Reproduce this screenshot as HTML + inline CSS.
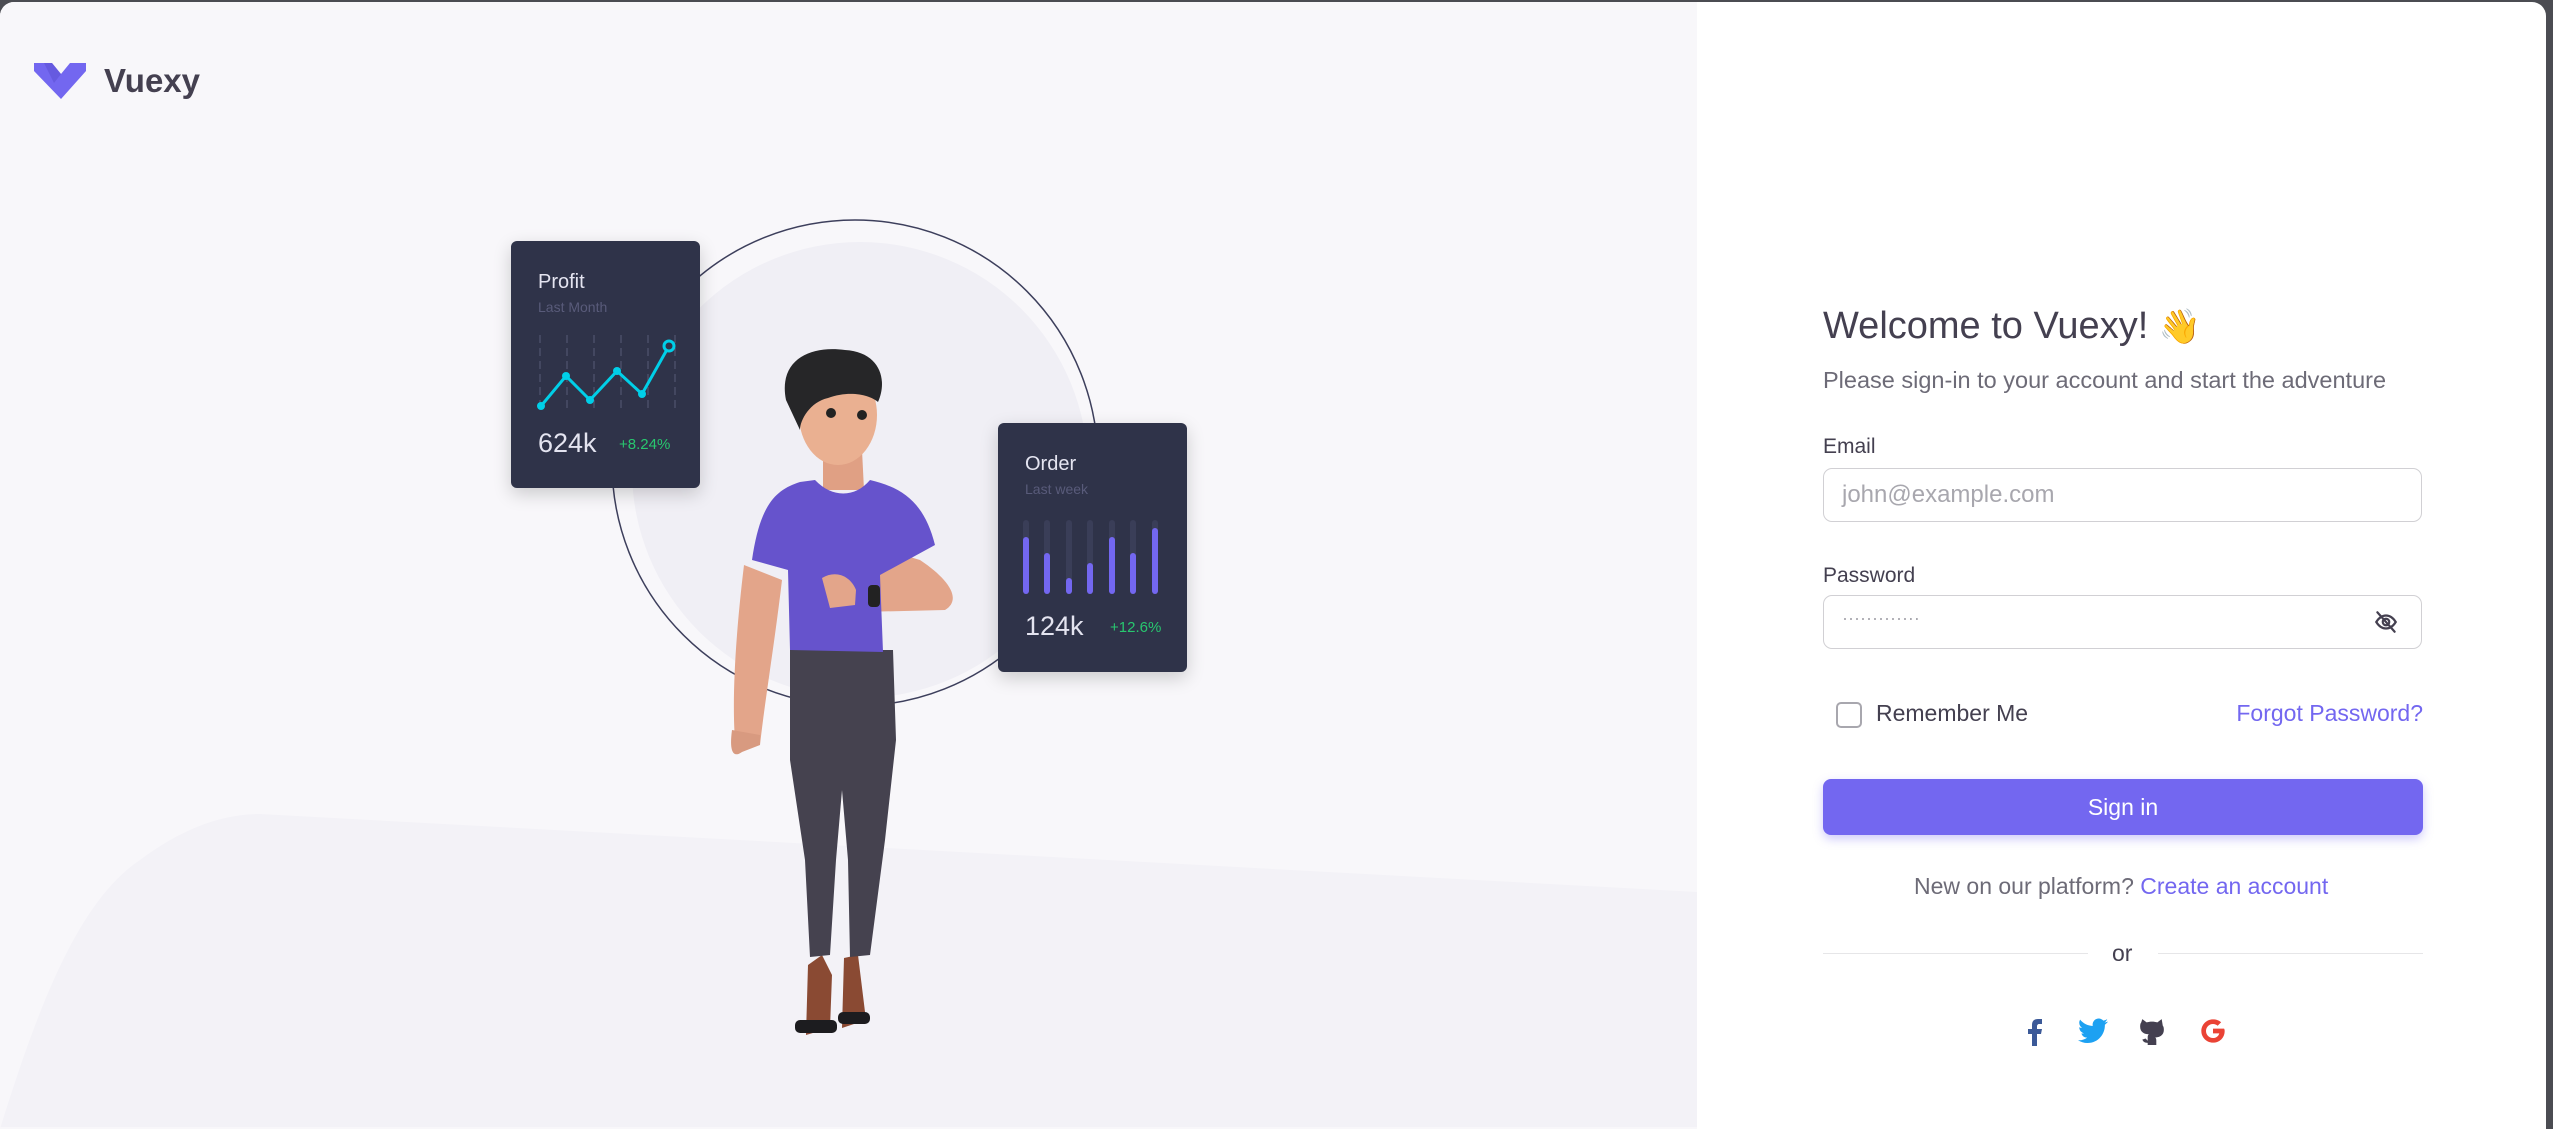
<!DOCTYPE html>
<html><head><meta charset="utf-8"><style>
html,body{margin:0;padding:0;width:2553px;height:1129px;overflow:hidden;background:#4b4c52;font-family:"Liberation Sans",sans-serif}
#page{position:absolute;left:0;top:2px;width:2546px;height:1127px;border-radius:14px 14px 0 0;overflow:hidden;background:#fff}
#left{position:absolute;left:0;top:0;width:1697px;height:1127px;background:#f8f7fa}
.t{position:absolute;white-space:nowrap}
.inp{position:absolute;left:1823px;width:599px;height:54px;border:1.5px solid #d1d0d4;border-radius:9px;box-sizing:border-box}
</style></head><body>
<div id="page">
<div id="left">
<svg width="1697" height="1127" style="position:absolute;left:0;top:-2px">
<path d="M260 814 L1697 892 L1697 1129 L0 1129 C40 1000 80 900 140 860 C180 830 220 814 260 814Z" fill="#f3f2f7"/>
<circle cx="860" cy="470" r="228" fill="#f0eff5"/>
<circle cx="855" cy="463" r="243" fill="none" stroke="#3d3f5c" stroke-width="1.5"/>
<!-- character -->
<path d="M806 1035 L808 965 L822 955 L832 975 L830 1028Z M842 1028 L844 958 L858 955 L866 1020Z" fill="#8a4a33"/>
<rect x="795" y="1020" width="42" height="13" rx="5" fill="#1c1c1f"/><rect x="838" y="1012" width="32" height="12" rx="5" fill="#1c1c1f"/>
<path d="M790 650 L893 650 L896 740 L885 840 L870 955 L850 957 L848 860 L842 790 L836 860 L830 955 L810 957 L805 860 L790 760Z" fill="#45424f"/>
<path d="M744 565 C735 640 732 700 735 740 L760 745 C765 700 775 640 782 580Z" fill="#e3a58a"/>
<path d="M732 730 C728 760 738 755 742 752 L760 745 L760 735Z" fill="#d89a80"/>
<path d="M870 545 L920 560 C950 580 962 600 945 610 L860 612 L850 590Z" fill="#e3a58a"/>
<path d="M823 450 L862 450 L864 490 L823 490Z" fill="#e0a084"/>
<path d="M800 482 C775 490 760 505 752 560 L788 570 L790 650 L883 652 L880 575 L935 545 C925 505 905 488 870 480 C855 498 832 498 815 480Z" fill="#6653cc"/>
<ellipse cx="838" cy="415" rx="39" ry="50" fill="#eab091"/>
<path d="M786 400 C778 360 810 345 845 350 C880 352 888 380 878 402 C870 395 850 390 828 398 C810 402 800 420 800 430Z" fill="#262628"/>
<circle cx="831" cy="413" r="5" fill="#222"/><circle cx="862" cy="415" r="5" fill="#222"/>
<path d="M822 578 C835 570 850 575 856 590 L855 605 L830 608Z" fill="#e3a58a"/>
<rect x="868" y="585" width="12" height="22" rx="4" fill="#222"/>
</svg>
<!-- logo -->
<svg width="54" height="38" viewBox="0 0 54 38" style="position:absolute;left:34px;top:61px">
<path d="M0 0 L18 0 L27 11 L36 0 L52 0 L52 8 L27 36 L0 8Z" fill="#7367f0"/>
<path d="M10 0 L18 0 L27 11 L20 20Z" fill="#5e52d6" opacity=".6"/>
</svg>
<div class="t" style="left:104px;top:60px;font-size:33px;font-weight:bold;color:#444050">Vuexy</div>
<!-- profit card -->
<div style="position:absolute;left:511px;top:239px;width:189px;height:247px;background:#2f3349;border-radius:6px;box-shadow:0 6px 18px rgba(0,0,0,.18)">
<div class="t" style="left:27px;top:30px;font-size:20px;color:#e4e4f0">Profit</div>
<div class="t" style="left:27px;top:58px;font-size:14px;color:#595b7a">Last Month</div>
<svg width="160" height="80" style="position:absolute;left:18px;top:92px">
<g stroke="#4a4e68" stroke-width="1.5" stroke-dasharray="8 5"><line x1="11" y1="2" x2="11" y2="78"/><line x1="38" y1="2" x2="38" y2="78"/><line x1="65" y1="2" x2="65" y2="78"/><line x1="92" y1="2" x2="92" y2="78"/><line x1="119" y1="2" x2="119" y2="78"/><line x1="146" y1="2" x2="146" y2="78"/></g>
<polyline points="12,73 37,43 61,67 88,38 113,61 140,13" fill="none" stroke="#00cfe8" stroke-width="3"/>
<g fill="#00cfe8"><circle cx="12" cy="73" r="4"/><circle cx="37" cy="43" r="4"/><circle cx="61" cy="67" r="4"/><circle cx="88" cy="38" r="4"/><circle cx="113" cy="61" r="4"/></g>
<circle cx="140" cy="13" r="5" fill="#2f3349" stroke="#00cfe8" stroke-width="3"/>
</svg>
<div class="t" style="left:27px;top:187px;font-size:27px;color:#e4e4f0">624k</div>
<div class="t" style="left:108px;top:195px;font-size:15px;color:#28c76f">+8.24%</div>
</div>
<!-- order card -->
<div style="position:absolute;left:998px;top:421px;width:189px;height:249px;background:#2f3349;border-radius:6px;box-shadow:0 6px 18px rgba(0,0,0,.18)">
<div class="t" style="left:27px;top:30px;font-size:20px;color:#e4e4f0">Order</div>
<div class="t" style="left:27px;top:58px;font-size:14px;color:#595b7a">Last week</div>
<svg width="160" height="80" style="position:absolute;left:18px;top:95px">
<g stroke="#3a3e58" stroke-width="6" stroke-linecap="round"><line x1="10" y1="5" x2="10" y2="73"/><line x1="31" y1="5" x2="31" y2="73"/><line x1="53" y1="5" x2="53" y2="73"/><line x1="74" y1="5" x2="74" y2="73"/><line x1="96" y1="5" x2="96" y2="73"/><line x1="117" y1="5" x2="117" y2="73"/><line x1="139" y1="5" x2="139" y2="73"/></g>
<g stroke="#7367f0" stroke-width="6" stroke-linecap="round"><line x1="10" y1="22" x2="10" y2="73"/><line x1="31" y1="38" x2="31" y2="73"/><line x1="53" y1="63" x2="53" y2="73"/><line x1="74" y1="48" x2="74" y2="73"/><line x1="96" y1="22" x2="96" y2="73"/><line x1="117" y1="38" x2="117" y2="73"/><line x1="139" y1="13" x2="139" y2="73"/></g>
</svg>
<div class="t" style="left:27px;top:188px;font-size:27px;color:#e4e4f0">124k</div>
<div class="t" style="left:112px;top:196px;font-size:15px;color:#28c76f">+12.6%</div>
</div>
</div>
<!-- form -->
<div class="t" style="left:1823px;top:303px;font-size:38px;color:#444050">Welcome to Vuexy! <span style="font-size:34px">👋</span></div>
<div class="t" style="left:1823px;top:365px;font-size:23.5px;color:#6d6b77">Please sign-in to your account and start the adventure</div>
<div class="t" style="left:1823px;top:433px;font-size:21px;color:#444050">Email</div>
<div class="inp" style="top:466px"></div>
<div class="t" style="left:1842px;top:479px;font-size:24px;color:#a8a7ae">john@example.com</div>
<div class="t" style="left:1823px;top:562px;font-size:21px;color:#444050">Password</div>
<div class="inp" style="top:593px"></div>
<div class="t" style="left:1842px;top:606px;font-size:18px;color:#a8a7ae;letter-spacing:0px">·············</div>
<svg width="28" height="26" viewBox="0 0 24 24" style="position:absolute;left:2372px;top:607px" fill="none" stroke="#444050" stroke-width="2" stroke-linecap="round">
<path d="M3 12c2.5-4 5.5-6 9-6s6.5 2 9 6c-2.5 4-5.5 6-9 6s-6.5-2-9-6z"/><circle cx="12" cy="12" r="3"/><line x1="4" y1="3" x2="20" y2="21"/></svg>
<div style="position:absolute;left:1836px;top:700px;width:22px;height:22px;border:2.5px solid #a8a7ae;border-radius:5px"></div>
<div class="t" style="left:1876px;top:698px;font-size:23px;color:#444050">Remember Me</div>
<div class="t" style="right:123px;top:698px;font-size:23px;color:#7367f0">Forgot Password?</div>
<div style="position:absolute;left:1823px;top:777px;width:600px;height:56px;background:#7367f0;border-radius:8px;box-shadow:0 4px 10px rgba(115,103,240,.35);color:#fff;font-size:23px;text-align:center;line-height:56px">Sign in</div>
<div class="t" style="left:1914px;top:871px;font-size:23px;color:#6d6b77">New on our platform? <span style="color:#7367f0">Create an account</span></div>
<div style="position:absolute;left:1823px;top:951px;width:265px;height:1px;background:#e6e6e8"></div>
<div style="position:absolute;left:2158px;top:951px;width:265px;height:1px;background:#e6e6e8"></div>
<div class="t" style="left:2112px;top:938px;font-size:23px;color:#444050">or</div>
<svg width="20" height="28" viewBox="0 0 20 28" style="position:absolute;left:2025px;top:1016px"><path d="M7 28V16H3v-5h4V7c0-4 2-6 6-6h4v5h-3c-1 0-2 1-2 2v3h5l-1 5h-4v12z" fill="#3b5998"/></svg>
<svg width="30" height="26" viewBox="0 0 24 20" style="position:absolute;left:2078px;top:1016px"><path d="M24 2.4c-.9.4-1.8.7-2.8.8 1-.6 1.8-1.6 2.2-2.7-1 .6-2 1-3.1 1.2C19.3.7 18 0 16.6 0c-2.7 0-4.9 2.2-4.9 4.9 0 .4 0 .8.1 1.1C7.7 5.8 4.1 3.9 1.7.9c-.4.7-.7 1.6-.7 2.5 0 1.700.9 3.2 2.2 4.1-.8 0-1.600-.2-2.2-.6v.1c0 2.4 1.7 4.4 3.9 4.8-.4.1-.8.2-1.3.2-.3 0-.6 0-.9-.1.6 2 2.4 3.4 4.6 3.4-1.7 1.3-3.8 2.1-6.1 2.1H0c2.2 1.4 4.8 2.2 7.5 2.2 9.1 0 14-7.5 14-14v-.6c1-.7 1.8-1.6 2.5-2.5z" fill="#1da1f2"/></svg>
<svg width="26" height="28" viewBox="0 0 24 26" style="position:absolute;left:2139px;top:1015px"><path d="M3 2l4 3c3-1 7-1 10 0l4-3 1 6c1 1 1 3 1 4 0 5-4 7-8 7 1 1 1 2 1 3v4H8v-2c-3 0-4-1-5-3l3-1 2 2v-3c0-1 0-2 1-3-4 0-8-2-8-7 0-1 0-3 1-4z" fill="#444050"/></svg>
<svg width="28" height="28" viewBox="0 0 24 24" style="position:absolute;left:2199px;top:1015px"><path d="M21.5 10H12v4h5.4c-.7 2.5-2.8 4-5.4 4-3.3 0-6-2.7-6-6s2.700-6 6-6c1.5 0 2.9.6 4 1.5l3-3C17.2 2.8 14.7 2 12 2 6.5 2 2 6.5 2 12s4.5 10 10 10c5.5 0 10-4 10-10 0-.7-.1-1.3-.5-2z" fill="#ea4335"/></svg>
</div>
</body></html>
